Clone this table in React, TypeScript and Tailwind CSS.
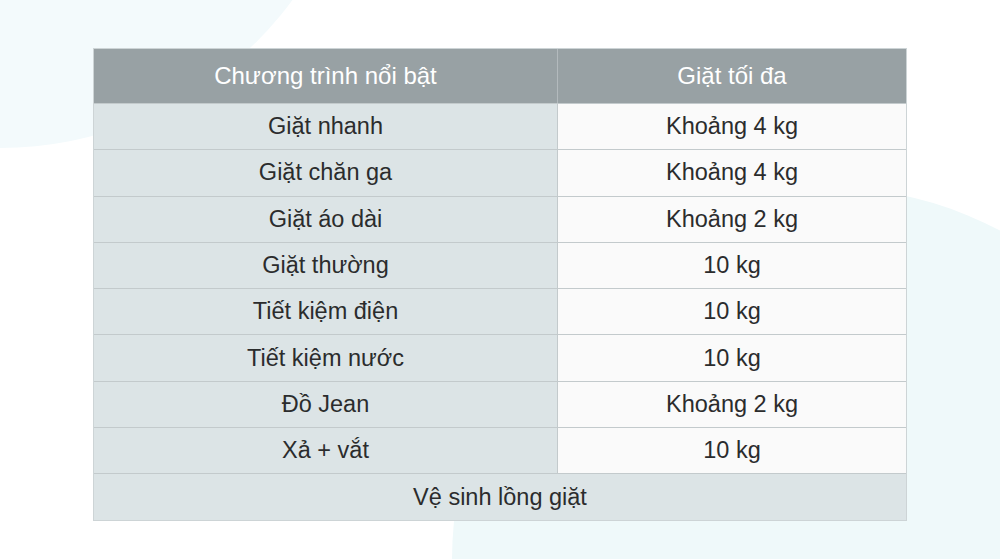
import React from 'react'

const rows: [string, string][] = [
  ['Giặt nhanh', 'Khoảng 4 kg'],
  ['Giặt chăn ga', 'Khoảng 4 kg'],
  ['Giặt áo dài', 'Khoảng 2 kg'],
  ['Giặt thường', '10 kg'],
  ['Tiết kiệm điện', '10 kg'],
  ['Tiết kiệm nước', '10 kg'],
  ['Đồ Jean', 'Khoảng 2 kg'],
  ['Xả + vắt', '10 kg'],
]

export default function App() {
  return (
    <div
      className="relative w-[1000px] h-[559px] overflow-hidden bg-white"
      style={{ fontFamily: '"Liberation Sans", Arial, sans-serif' }}
    >
      {/* background blobs */}
      <div className="absolute left-[-363px] top-[-578px] w-[726px] h-[726px] rounded-full bg-[#f3fafc]" />
      <div className="absolute left-[452px] top-[187px] w-[746px] h-[746px] rounded-full bg-[#eff9fa]" />

      <div className="relative pt-[48px] pl-[93px]">
        <div className="w-[814px] border border-[#cdd4d6] text-[23.5px] text-[#2b2c2d]">
          {/* header */}
          <div className="grid grid-cols-[464px_1fr] h-[54px] bg-[#98a1a4] text-white text-[24px]">
            <div className="flex items-center justify-center border-r border-[#b3babd]">
              Chương trình nổi bật
            </div>
            <div className="flex items-center justify-center">Giặt tối đa</div>
          </div>

          {rows.map(([name, load]) => (
            <div
              key={name}
              className="grid grid-cols-[464px_1fr] h-[46.3px] border-t border-[#c3cacc]"
            >
              <div className="flex items-center justify-center bg-[#dce4e6] border-r border-[#c3cacc]">
                {name}
              </div>
              <div className="flex items-center justify-center bg-[#fafafa]">{load}</div>
            </div>
          ))}

          <div className="flex items-center justify-center h-[47px] border-t border-[#c3cacc] bg-[#dce4e6]">
            Vệ sinh lồng giặt
          </div>
        </div>
      </div>
    </div>
  )
}
